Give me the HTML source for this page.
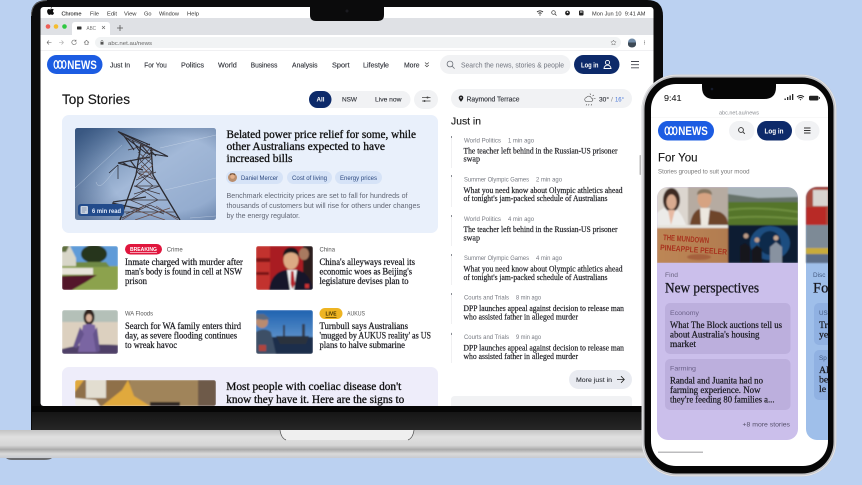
<!DOCTYPE html>
<html><head><meta charset="utf-8"><style>
html,body{margin:0;padding:0;width:862px;height:485px;overflow:hidden;background:#bbd1f1}
svg{display:block}
text{font-family:"Liberation Sans",sans-serif;white-space:pre}
.n{font-size:7.5px;fill:#2a2d34;font-weight:400;stroke:#2a2d34;stroke-width:.12}
.m{font-size:6.2px;fill:#555}
.u{font-family:"Liberation Serif",serif;font-size:12px;fill:#111;stroke:#111;stroke-width:.32}
.s{font-family:"Liberation Serif",serif;font-size:9.8px;fill:#1a1a1f;stroke:#1a1a1f;stroke-width:.24}
.j{font-family:"Liberation Serif",serif;font-size:8.6px;fill:#1d1d22;stroke:#1d1d22;stroke-width:.2}
.d{font-size:7.4px;fill:#626775}
.c{font-size:6.4px;fill:#2d4a80}
.g{font-size:6.2px;fill:#777a82}
</style></head><body>
<svg xmlns="http://www.w3.org/2000/svg" width="862" height="485" viewBox="0 0 862 485">
<defs>
<linearGradient id="base" x1="0" y1="0" x2="0" y2="1"><stop offset="0" stop-color="#c4c4c4"/><stop offset=".25" stop-color="#e0e0e0"/><stop offset=".55" stop-color="#d6d6d6"/><stop offset=".7" stop-color="#a9a9a9"/><stop offset=".85" stop-color="#dadada"/><stop offset="1" stop-color="#c8cad0"/></linearGradient>
<linearGradient id="bez" x1="0" y1="0" x2="0" y2="1"><stop offset="0" stop-color="#101010"/><stop offset="1" stop-color="#262626"/></linearGradient>
<linearGradient id="sky" x1="0" y1="0" x2="1" y2="1"><stop offset="0" stop-color="#4f7099"/><stop offset=".5" stop-color="#a3b9d8"/><stop offset="1" stop-color="#8ea7cb"/></linearGradient>
<radialGradient id="vig" cx=".65" cy=".5" r=".75"><stop offset=".55" stop-color="#1e3a66" stop-opacity="0"/><stop offset="1" stop-color="#1e3a66" stop-opacity=".5"/></radialGradient>
<linearGradient id="sky2" x1="0" y1="0" x2="0" y2="1"><stop offset="0" stop-color="#1f62b0"/><stop offset="1" stop-color="#7ba9d8"/></linearGradient>
<linearGradient id="card" x1="0" y1="0" x2="1" y2="0"><stop offset="0" stop-color="#9a7b4a"/><stop offset="1" stop-color="#6d5138"/></linearGradient>
<filter id="b1" x="-5%" y="-5%" width="110%" height="110%"><feGaussianBlur stdDeviation=".7"/></filter>
<filter id="b2" x="-5%" y="-5%" width="110%" height="110%"><feGaussianBlur stdDeviation=".35"/></filter>
<clipPath id="cS"><rect x="40.5" y="7" width="613" height="399" rx="3"/></clipPath>
<clipPath id="c0"><rect x="75" y="128" width="141" height="92" rx="2.5"/></clipPath>
<clipPath id="c1"><rect x="62" y="246" width="56" height="44" rx="2.5"/></clipPath>
<clipPath id="c2"><rect x="256" y="246" width="57" height="44" rx="2.5"/></clipPath>
<clipPath id="c3"><rect x="62" y="310" width="56" height="44" rx="2.5"/></clipPath>
<clipPath id="c4"><rect x="256" y="310" width="57" height="44" rx="2.5"/></clipPath>
<clipPath id="c5"><rect x="75" y="380" width="141" height="26" rx="2.5"/></clipPath>
<clipPath id="cP"><rect x="651" y="84" width="177" height="382" rx="25"/></clipPath>
<clipPath id="cC"><path d="M657 263V198a11 11 0 0 1 11-11h119a11 11 0 0 1 11 11v65z"/></clipPath>
</defs>

<rect width="862" height="485" fill="#bbd1f1"/>

<!-- LAPTOP -->
<path d="M31 430V16Q31 0 47 0H647Q663 0 663 16V430z" fill="#0b0b0c"/>
<path d="M31.500 16Q31.500 .6 47 .6" fill="none" stroke="#666" stroke-width=".8"/>
<rect x="32" y="406" width="622" height="24" fill="url(#bez)"/>
<rect x="32" y="406" width="622" height="6" fill="#060606"/>
<rect x="0" y="430" width="662" height="28" fill="url(#base)"/>
<path d="M280 430h134l-2 6q-1 4-6 4H288q-5 0-6-4z" fill="#efefef"/>
<path d="M280 430q1 8 6 10M414 430q-1 8-6 10" stroke="#555" stroke-width=".7" fill="none"/>
<path d="M6 458H52Q50 460 44 460H12Q8 460 6 458z" fill="#6a6c70"/>

<g clip-path="url(#cS)">
<rect x="40" y="7" width="614" height="400" fill="#fff"/>
<g filter="url(#b2)">
<rect x="40" y="18" width="614" height="17" fill="#dfe1e5"/>
<path d="M50 9.500c1 0 1.200-.6 2.200-.6.7 0 1.300.4 1.600.9-1.300.8-1 2.600.3 3.100-.4 1-1 2-1.800 2-.6 0-.8-.4-1.500-.4s-.9.4-1.500.4c-1.100 0-2.200-2-2.200-3.600 0-1.500 1-2.300 1.900-2.300zM52 7.300c0 .8-.7 1.500-1.400 1.400 0-.8.7-1.500 1.400-1.400z" fill="#111"/>
<text x="61.500" y="15.400" font-size="5.300" fill="#222" stroke="#222" stroke-width=".1" textLength="20" lengthAdjust="spacingAndGlyphs">Chrome</text>
<text x="90" y="15.400" font-size="5.300" fill="#333" textLength="9" lengthAdjust="spacingAndGlyphs">File</text>
<text x="107" y="15.400" font-size="5.300" fill="#333" textLength="10" lengthAdjust="spacingAndGlyphs">Edit</text>
<text x="124" y="15.400" font-size="5.300" fill="#333" textLength="12.500" lengthAdjust="spacingAndGlyphs">View</text>
<text x="144" y="15.400" font-size="5.300" fill="#333" textLength="7.500" lengthAdjust="spacingAndGlyphs">Go</text>
<text x="159" y="15.400" font-size="5.300" fill="#333" textLength="20" lengthAdjust="spacingAndGlyphs">Window</text>
<text x="187" y="15.400" font-size="5.300" fill="#333" textLength="12" lengthAdjust="spacingAndGlyphs">Help</text>
<path d="M537 12q3-2.400 6 0M538.500 13.500q1.500-1.200 3 0" stroke="#222" fill="none" stroke-width=".9"/><circle cx="540" cy="15" r=".6" fill="#222"/>
<circle cx="553.500" cy="12.500" r="1.800" fill="none" stroke="#333" stroke-width=".7"/><path d="M555 14l1.500 1.500" stroke="#333" stroke-width=".7"/>
<circle cx="567.500" cy="13" r="2.400" fill="#222"/><circle cx="567.500" cy="12.300" r=".8" fill="#fff"/>
<rect x="579" y="10.500" width="4.500" height="5" rx="1" fill="#222"/><rect x="580" y="11.500" width="2.500" height="1" fill="#fff"/>
<text x="592" y="15.400" font-size="5.200" fill="#333" textLength="53.500" lengthAdjust="spacingAndGlyphs">Mon Jun 10  9:41 AM</text>
<circle cx="48" cy="26.500" r="2.300" fill="#ee5f56"/><circle cx="56" cy="26.500" r="2.300" fill="#f5bd2f"/><circle cx="64.500" cy="26.500" r="2.300" fill="#2fc840"/>
<path d="M72 35v-10q0-3 3-3h32q3 0 3 3v10z" fill="#fff"/>
<rect x="77" y="26.500" width="4.500" height="3" rx=".5" fill="#333"/>
<text x="86.500" y="30" font-size="5" fill="#777" textLength="9.500" lengthAdjust="spacingAndGlyphs">ABC</text>
<path d="M102 26l3 3M105 26l-3 3" stroke="#666" stroke-width=".6"/>
<path d="M120 25v6M117 28h6" stroke="#555" stroke-width=".8"/>
<rect x="40" y="35" width="614" height="15" fill="#fff"/>
<rect x="40" y="50" width="614" height=".6" fill="#e6e6e8"/>
<path d="M47 42.500h4.500M47 42.500l2-2M47 42.500l2 2" stroke="#666" stroke-width=".6" fill="none"/>
<path d="M59 42.500h4.500M63.500 42.500l-2-2M63.500 42.500l-2 2" stroke="#aaa" stroke-width=".6" fill="none"/>
<path d="M76 41a2.300 2.300 0 1 0 .4 1.500M76 39.800v1.400h-1.400" stroke="#666" stroke-width=".6" fill="none"/>
<path d="M84 42.500l2.500-2.200 2.500 2.200M85 42v2.500h3V42" stroke="#666" stroke-width=".6" fill="none"/>
<rect x="95" y="37" width="526" height="11" rx="5.500" fill="#f1f3f4"/>
<rect x="100.500" y="42" width="3" height="2.600" fill="#555"/><path d="M101 42v-.7a1 1 0 0 1 2 0v.7" stroke="#555" stroke-width=".5" fill="none"/>
<text x="108" y="45" font-size="5.400" fill="#666" textLength="44" lengthAdjust="spacingAndGlyphs">abc.net.au/news</text>
<path d="M613.500 40l.8 1.700 1.800.2-1.300 1.300.3 1.800-1.600-.9-1.600.9.300-1.800-1.300-1.300 1.800-.2z" fill="none" stroke="#777" stroke-width=".5"/>
<circle cx="632" cy="42.500" r="4" fill="#6f8aa6"/><path d="M628 42.500h8v2a4 3 0 0 1-8 0z" fill="#3d4a55"/>
<circle cx="644.500" cy="41" r=".5" fill="#777"/><circle cx="644.500" cy="42.500" r=".5" fill="#777"/><circle cx="644.500" cy="44" r=".5" fill="#777"/>
</g>

<g filter="url(#b2)">
<rect x="47" y="55" width="55.500" height="19" rx="9.500" fill="#1c5be2"/>
<g fill="none" stroke="#fff" stroke-width="1.200">
<ellipse cx="56" cy="64.500" rx="1.900" ry="3.900"/><ellipse cx="60" cy="64.500" rx="1.900" ry="3.900"/><ellipse cx="64" cy="64.500" rx="1.900" ry="3.900"/>
</g>
<text x="67.300" y="68.800" font-size="11.500" font-weight="700" fill="#fff" textLength="29.500" lengthAdjust="spacingAndGlyphs">NEWS</text>
<text class="n" x="110" y="67.500" textLength="20" lengthAdjust="spacingAndGlyphs">Just In</text>
<text class="n" x="144.300" y="67.500" textLength="22.500" lengthAdjust="spacingAndGlyphs">For You</text>
<text class="n" x="181" y="67.500" textLength="23" lengthAdjust="spacingAndGlyphs">Politics</text>
<text class="n" x="218" y="67.500" textLength="18.800" lengthAdjust="spacingAndGlyphs">World</text>
<text class="n" x="250.700" y="67.500" textLength="26.700" lengthAdjust="spacingAndGlyphs">Business</text>
<text class="n" x="292" y="67.500" textLength="25.500" lengthAdjust="spacingAndGlyphs">Analysis</text>
<text class="n" x="332" y="67.500" textLength="17.500" lengthAdjust="spacingAndGlyphs">Sport</text>
<text class="n" x="363" y="67.500" textLength="26" lengthAdjust="spacingAndGlyphs">Lifestyle</text>
<text class="n" x="404" y="67.500" textLength="15.500" lengthAdjust="spacingAndGlyphs">More</text>
<path d="M425 62.500l1.900 1.800 1.900-1.800M425 65l1.900 1.800 1.900-1.800" stroke="#444" stroke-width=".7" fill="none"/>
<rect x="440" y="55" width="130.500" height="19" rx="9.500" fill="#f1f2f4"/>
<circle cx="450" cy="64" r="2.900" fill="none" stroke="#6b6f78" stroke-width=".8"/><path d="M452.100 66.100l2.500 2.500" stroke="#6b6f78" stroke-width=".8"/>
<text x="461" y="67.500" font-size="7.200" fill="#71757f" textLength="103" lengthAdjust="spacingAndGlyphs">Search the news, stories &amp; people</text>
<rect x="574" y="55" width="45.500" height="19" rx="9.500" fill="#0f2c6b"/>
<text x="581" y="67.500" font-size="7.400" font-weight="700" fill="#fff" textLength="17.500" lengthAdjust="spacingAndGlyphs">Log in</text>
<circle cx="607.500" cy="62.500" r="2.100" fill="none" stroke="#fff" stroke-width=".9"/><path d="M604 68.500q.5-3.300 3.500-3.300t3.500 3.300z" fill="none" stroke="#fff" stroke-width=".9"/>
<path d="M631 61.500h8M631 64.700h8M631 67.800h8" stroke="#44474f" stroke-width=".9"/>
</g>

<g filter="url(#b2)">
<text x="62" y="104" font-size="14" fill="#151515" stroke="#151515" stroke-width=".15" textLength="68" lengthAdjust="spacingAndGlyphs">Top Stories</text>
<rect x="320" y="91" width="90.500" height="17" rx="8.500" fill="#f1f2f4"/>
<rect x="309" y="91" width="22.500" height="17" rx="8.500" fill="#0f2c6b"/>
<text x="316.500" y="101.500" font-size="6.600" font-weight="700" fill="#fff" textLength="8" lengthAdjust="spacingAndGlyphs">All</text>
<text x="342" y="101.500" class="n" style="font-size:6.800px" textLength="15" lengthAdjust="spacingAndGlyphs">NSW</text>
<text x="375" y="101.500" class="n" style="font-size:6.800px" textLength="26.500" lengthAdjust="spacingAndGlyphs">Live now</text>
<rect x="414" y="90" width="24" height="19" rx="9.500" fill="#f1f2f4"/>
<path d="M422 97.500h8.500M422 101h8.500" stroke="#444" stroke-width=".7"/><circle cx="427.500" cy="97.500" r="1" fill="#444"/><circle cx="424.500" cy="101" r="1" fill="#444"/>

<rect x="451" y="89" width="181" height="19" rx="9.500" fill="#f1f2f4"/>
<path d="M461 95.500a2.300 2.300 0 0 1 2.300 2.300c0 1.700-2.300 4-2.300 4s-2.300-2.300-2.300-4a2.300 2.300 0 0 1 2.300-2.300z" fill="#1a1a1f"/><circle cx="461" cy="97.800" r=".8" fill="#f1f2f4"/>
<text x="466.500" y="101.500" class="n" style="font-size:7px" textLength="53" lengthAdjust="spacingAndGlyphs">Raymond Terrace</text>
<path d="M585 100.500a2 2 0 0 1 1.500-3 2.600 2.600 0 0 1 4.800.6 1.700 1.700 0 0 1 .4 3.300h-6a1.500 1.500 0 0 1-.7-.9zM590 93.500l.5 1.500M594 95l-1.500 1M595.500 98.500l-1.800-.1M586.500 104l-.4 1.500M589 104l-.4 1.500M591.500 104l-.4 1.500" fill="none" stroke="#444" stroke-width=".55"/>
<text x="599" y="101.500" font-size="6.800" fill="#2a2d34" stroke="#2a2d34" stroke-width=".1" textLength="10" lengthAdjust="spacingAndGlyphs">30°</text>
<text x="611" y="101.500" font-size="6.800" fill="#888">/</text>
<text x="615" y="101.500" font-size="6.800" fill="#4a78d8" textLength="9" lengthAdjust="spacingAndGlyphs">16°</text>

<rect x="62" y="115" width="376" height="118" rx="7" fill="#e9f0fb"/>
</g>
<g clip-path="url(#c0)">
<rect x="75" y="128" width="141" height="92" fill="url(#sky)"/>
<rect x="75" y="128" width="141" height="92" fill="url(#vig)"/>
<g filter="url(#b2)" fill="none">
<path d="M75 188L122 145M160 148L216 135M165 190L216 178M190 218L216 216M118 165q-8 12-14 18t-8-1" stroke="#dde5f0" stroke-opacity=".55" stroke-width=".5"/>
<path d="M118 131.500L168 156.500 146 153 118 131.500zM118 131.500L150 145M124 136L134 150M132 140L140 152M142 146L150 155M150 150L156 156" stroke="#2b2a30" stroke-width="1.100"/>
<path d="M118 163L150 157M118 163L143 170M113 202L146 197M112 203L140 209M122 162L130 167M130 160L136 168" stroke="#2f2e35" stroke-width="1.200"/>
<path d="M141 144L136 175 120 220M151 147L153 175 180 220" stroke="#2a292f" stroke-width="1.300"/>
<path d="M141 144L152 158 137 172 153 186 130 200 164 214M151 147L140 160 152 172 136 186 158 200 126 214M128 150L150 144M125 137L158 152M139 172H153M134 186H160M128 200H168M124 212H176M122 218L150 205 178 218M137 158H152M138 165L153 150M138 152L153 165M136 180L156 172M136 172L156 180M134 194L160 186M134 186L160 194" stroke="#3f383d" stroke-width=".7"/>
<path d="M122 220L144 206M178 220L156 206M130 208L165 220M170 208L135 220M141 165L153 178M153 165L138 178" stroke="#6a4f4a" stroke-width=".7"/>
<path d="M118 165v14M118 165l-9 8" stroke="#23232a" stroke-width=".7"/>
</g>
</g>
<g filter="url(#b2)">
<rect x="78" y="204" width="46" height="12" rx="3" fill="#214b8b"/>
<rect x="80.500" y="206" width="7.500" height="8" rx="1" fill="#c8d2e0"/><path d="M82 208h4.500M82 210h4.500M82 212h3" stroke="#4d6488" stroke-width=".5"/>
<text x="92" y="213" font-size="6.400" font-weight="700" fill="#e6eefc" textLength="29" lengthAdjust="spacingAndGlyphs">6 min read</text>

<text class="u" x="226.500" y="138" textLength="189.500" lengthAdjust="spacingAndGlyphs">Belated power price relief for some, while</text>
<text class="u" x="226.500" y="150" textLength="158.500" lengthAdjust="spacingAndGlyphs">other Australians expected to have</text>
<text class="u" x="226.500" y="162" textLength="66" lengthAdjust="spacingAndGlyphs">increased bills</text>

<rect x="226" y="171" width="57" height="13" rx="6.500" fill="#d6e3f7"/>
<circle cx="232.500" cy="177.500" r="4.500" fill="#b98e6e"/><circle cx="232.500" cy="176.500" r="2.300" fill="#e3b08c"/><path d="M230 175.500q2.500-2.500 5 0l-.2-2h-4.600z" fill="#6a4a32"/>
<text class="c" x="241" y="179.800" textLength="37" lengthAdjust="spacingAndGlyphs">Daniel Mercer</text>
<rect x="287" y="171" width="45" height="13" rx="6.500" fill="#d6e3f7"/>
<text class="c" x="292" y="179.800" textLength="35" lengthAdjust="spacingAndGlyphs">Cost of living</text>
<rect x="335" y="171" width="47" height="13" rx="6.500" fill="#d6e3f7"/>
<text class="c" x="340" y="179.800" textLength="37" lengthAdjust="spacingAndGlyphs">Energy prices</text>

<text class="d" x="226.500" y="198" textLength="181" lengthAdjust="spacingAndGlyphs">Benchmark electricity prices are set to fall for hundreds of</text>
<text class="d" x="226.500" y="208" textLength="193.500" lengthAdjust="spacingAndGlyphs">thousands of customers but will rise for others under changes</text>
<text class="d" x="226.500" y="218" textLength="73.500" lengthAdjust="spacingAndGlyphs">by the energy regulator.</text>
</g>

<g clip-path="url(#c1)"><g filter="url(#b1)">
<rect x="62" y="246" width="56" height="44" fill="#5f9bd8"/>
<ellipse cx="94" cy="254" rx="13" ry="9" fill="#27351f"/>
<path d="M62 249l8-3 6 12v8H62z" fill="#d8d6c8"/>
<path d="M62 246h7l-3 6h-4z" fill="#5e6e3c"/>
<rect x="62" y="266" width="56" height="24" fill="#8ca24e"/>
<path d="M76 262h30l4 5H76z" fill="#6f8a44"/>
<rect x="62" y="268" width="31" height="6.500" fill="#e8e4da"/>
<path d="M62 276L97 275 86 282 72 290H62z" fill="#52152a"/>
</g></g>
<g clip-path="url(#c2)"><g filter="url(#b1)">
<rect x="256" y="246" width="57" height="44" fill="#a91e22"/>
<rect x="256" y="246" width="14" height="44" fill="#c2322f"/>
<path d="M256 258h14v4h-14zM256 272h13v3h-13z" fill="#7c1313"/>
<rect x="303" y="246" width="10" height="44" fill="#2c1a1c"/>
<ellipse cx="304" cy="254" rx="5" ry="6" fill="#a87a60"/>
<path d="M269 290q2-17 16-20h13q12 3 15 20z" fill="#12172a"/>
<path d="M287 270h10l-3 20h-4z" fill="#eef0f2"/><path d="M291 271h2.500l1.500 13-2.500 5-2-5z" fill="#b4222c"/>
<ellipse cx="291" cy="260" rx="7.500" ry="9.500" fill="#dcaa84"/>
<path d="M283 257q0-9.500 8-9.500t8 9.500q-3-4.500-8-4.500t-8 4.500z" fill="#15141a"/>
<rect x="305" y="284" width="4" height="4" fill="#c73030"/>
</g></g>
<g clip-path="url(#c3)"><g filter="url(#b1)">
<rect x="62" y="310" width="56" height="14" fill="#b4c0b8"/>
<rect x="62" y="322" width="56" height="32" fill="#dcd0bf"/>
<path d="M62 349q20-6 56-4v9H62z" fill="#4f4168"/>
<ellipse cx="89" cy="317" rx="5.500" ry="8" fill="#2f221d"/>
<ellipse cx="89" cy="318" rx="3" ry="4" fill="#d9b29a"/>
<path d="M83 325q6-2 12 0l3 27H78z" fill="#7a65a2"/>
<path d="M80 327l-7 20 4 1 7-14zM97 327l3 24-4 1-3-18z" fill="#65528c"/>
</g></g>
<g clip-path="url(#c4)"><g filter="url(#b1)">
<rect x="256" y="310" width="57" height="44" fill="url(#sky2)"/>
<rect x="256" y="337" width="57" height="17" fill="#1c2f4c"/>
<path d="M276 336h33l-3 8h-26z" fill="#2a313e"/>
<path d="M283 336v-11h2v11zM302 336v-12h3v12z" fill="#344052"/>
<path d="M256 354v-22q8-5 15 0l5 22z" fill="#3d4f66"/>
<ellipse cx="262" cy="322" rx="6" ry="6" fill="#b98b6f"/>
<path d="M256 314h8l6 5-6 1-8-1z" fill="#5d6b7e"/>
<rect x="259" y="345" width="7" height="6" fill="#b0453c"/>
</g></g>

<g filter="url(#b2)">
<rect x="125" y="244" width="37" height="10.500" rx="5.200" fill="#e0143c"/>
<text x="130" y="250.800" font-size="5.800" font-weight="700" fill="#fff" textLength="27" lengthAdjust="spacingAndGlyphs">BREAKING</text>
<rect x="130" y="252" width="27" height=".6" fill="#fff"/>
<text class="m" x="166.700" y="251.500" textLength="16" lengthAdjust="spacingAndGlyphs">Crime</text>
<text class="s" x="125" y="265" textLength="118" lengthAdjust="spacingAndGlyphs">Inmate charged with murder after</text>
<text class="s" x="125" y="274.500" textLength="117" lengthAdjust="spacingAndGlyphs">man's body is found in cell at NSW</text>
<text class="s" x="125" y="284" textLength="22" lengthAdjust="spacingAndGlyphs">prison</text>

<text class="m" x="319.500" y="251.500" textLength="15.500" lengthAdjust="spacingAndGlyphs">China</text>
<text class="s" x="319.500" y="265" textLength="95.500" lengthAdjust="spacingAndGlyphs">China's alleyways reveal its</text>
<text class="s" x="319.500" y="274.500" textLength="92.500" lengthAdjust="spacingAndGlyphs">economic woes as Beijing's</text>
<text class="s" x="319.500" y="284" textLength="89" lengthAdjust="spacingAndGlyphs">legislature devises plan to</text>

<text class="m" x="125" y="315.500" textLength="28" lengthAdjust="spacingAndGlyphs">WA Floods</text>
<text class="s" x="125" y="329" textLength="116" lengthAdjust="spacingAndGlyphs">Search for WA family enters third</text>
<text class="s" x="125" y="338.500" textLength="112" lengthAdjust="spacingAndGlyphs">day, as severe flooding continues</text>
<text class="s" x="125" y="348" textLength="52" lengthAdjust="spacingAndGlyphs">to wreak havoc</text>

<rect x="319.500" y="308" width="23" height="11" rx="5.500" fill="#eeb420"/>
<text x="325.500" y="315.500" font-size="5.800" font-weight="700" fill="#3a2c00" textLength="11" lengthAdjust="spacingAndGlyphs">LIVE</text>
<rect x="325.500" y="317" width="11" height=".6" fill="#3a2c00"/>
<text class="m" x="347" y="315.500" textLength="18" lengthAdjust="spacingAndGlyphs">AUKUS</text>
<text class="s" x="319.500" y="329" textLength="88.500" lengthAdjust="spacingAndGlyphs">Turnbull says Australians</text>
<text class="s" x="319.500" y="338.500" textLength="111.500" lengthAdjust="spacingAndGlyphs">'mugged by AUKUS reality' as US</text>
<text class="s" x="319.500" y="348" textLength="85.500" lengthAdjust="spacingAndGlyphs">plans to halve submarine</text>

<rect x="62" y="367" width="376" height="50" rx="7" fill="#eeedfa"/>
</g>
<g clip-path="url(#c5)"><g filter="url(#b1)">
<rect x="75" y="380" width="141" height="26" fill="#8f7048"/>
<rect x="130" y="380" width="70" height="26" fill="#a0845a"/>
<rect x="198" y="380" width="18" height="26" fill="#6e5a48"/>
<rect x="86" y="380" width="20" height="18" fill="#e2ddd0"/>
<path d="M75 392L84 380H75zM102 406L122 390 128 380 134 396 150 406z" fill="#e0a93d"/>
<path d="M75 406V398L96 400 100 406z" fill="#f0eee8"/>
<rect x="150" y="402" width="30" height="4" fill="#2d2620"/>
</g></g>
<g filter="url(#b2)">
<text class="u" x="226.300" y="390" textLength="175" lengthAdjust="spacingAndGlyphs">Most people with coeliac disease don't</text>
<text class="u" x="226.300" y="403" textLength="178" lengthAdjust="spacingAndGlyphs">know they have it. Here are the signs to</text>

<text x="451" y="124.500" font-size="10.500" fill="#151515" stroke="#151515" stroke-width=".12" textLength="30" lengthAdjust="spacingAndGlyphs">Just in</text>
<path d="M451.500 137v31M451.500 176v31M451.500 215v31M451.500 254v31M451.500 293v31M451.500 332v31" stroke="#f0f0f2" stroke-width="1"/>
<g fill="#8a8d94"><rect x="451" y="136" width="1" height="2"/><rect x="451" y="175" width="1" height="2"/><rect x="451" y="215" width="1" height="2"/><rect x="451" y="254" width="1" height="2"/><rect x="451" y="293" width="1" height="2"/><rect x="451" y="333" width="1" height="2"/></g>

<text class="g" x="464" y="142.500" textLength="37" lengthAdjust="spacingAndGlyphs">World Politics</text><text class="g" x="508" y="142.500" textLength="26" lengthAdjust="spacingAndGlyphs">1 min ago</text>
<text class="j" x="463.500" y="153.500" textLength="154" lengthAdjust="spacingAndGlyphs">The teacher left behind in the Russian-US prisoner</text>
<text class="j" x="463.500" y="161.500" textLength="16.500" lengthAdjust="spacingAndGlyphs">swap</text>

<text class="g" x="464" y="181.500" textLength="65" lengthAdjust="spacingAndGlyphs">Summer Olympic Games</text><text class="g" x="536" y="181.500" textLength="26" lengthAdjust="spacingAndGlyphs">2 min ago</text>
<text class="j" x="463.500" y="192.800" textLength="159" lengthAdjust="spacingAndGlyphs">What you need know about Olympic athletics ahead</text>
<text class="j" x="463.500" y="201" textLength="144" lengthAdjust="spacingAndGlyphs">of tonight's jam-packed schedule of Australians</text>

<text class="g" x="464" y="221" textLength="37" lengthAdjust="spacingAndGlyphs">World Politics</text><text class="g" x="508" y="221" textLength="26" lengthAdjust="spacingAndGlyphs">4 min ago</text>
<text class="j" x="463.500" y="232" textLength="154" lengthAdjust="spacingAndGlyphs">The teacher left behind in the Russian-US prisoner</text>
<text class="j" x="463.500" y="240.300" textLength="16.500" lengthAdjust="spacingAndGlyphs">swap</text>

<text class="g" x="464" y="260" textLength="65" lengthAdjust="spacingAndGlyphs">Summer Olympic Games</text><text class="g" x="536" y="260" textLength="26" lengthAdjust="spacingAndGlyphs">4 min ago</text>
<text class="j" x="463.500" y="271.500" textLength="159" lengthAdjust="spacingAndGlyphs">What you need know about Olympic athletics ahead</text>
<text class="j" x="463.500" y="279.800" textLength="144" lengthAdjust="spacingAndGlyphs">of tonight's jam-packed schedule of Australians</text>

<text class="g" x="464" y="299.500" textLength="45" lengthAdjust="spacingAndGlyphs">Courts and Trials</text><text class="g" x="516" y="299.500" textLength="25" lengthAdjust="spacingAndGlyphs">8 min ago</text>
<text class="j" x="463.500" y="311" textLength="160.500" lengthAdjust="spacingAndGlyphs">DPP launches appeal against decision to release man</text>
<text class="j" x="463.500" y="319.300" textLength="114.500" lengthAdjust="spacingAndGlyphs">who assisted father in alleged murder</text>

<text class="g" x="464" y="339" textLength="45" lengthAdjust="spacingAndGlyphs">Courts and Trials</text><text class="g" x="516" y="339" textLength="25" lengthAdjust="spacingAndGlyphs">9 min ago</text>
<text class="j" x="463.500" y="350.500" textLength="160.500" lengthAdjust="spacingAndGlyphs">DPP launches appeal against decision to release man</text>
<text class="j" x="463.500" y="358.800" textLength="114.500" lengthAdjust="spacingAndGlyphs">who assisted father in alleged murder</text>

<rect x="569" y="370" width="63" height="19" rx="9.500" fill="#e9ebf1"/>
<text x="576" y="382" font-size="6.800" fill="#2a2d34" stroke="#2a2d34" stroke-width=".08" textLength="36" lengthAdjust="spacingAndGlyphs">More just in</text>
<path d="M617 379.500h7M621 376.200l3.300 3.300-3.300 3.300" stroke="#222" stroke-width=".8" fill="none"/>
<path d="M451 406v-6q0-4 4-4h173q4 0 4 4v6z" fill="#f1f2f4"/>
</g>
<rect x="639.500" y="155" width="1.500" height="20" rx=".7" fill="#bbb"/>
</g>

<!-- PHONE -->
<rect x="641.500" y="74.500" width="195" height="402" rx="35" fill="#c2c3c6"/>
<rect x="642.200" y="75.200" width="193.600" height="400.600" rx="34.500" fill="none" stroke="#e8e8ea" stroke-width=".9"/>
<rect x="644.500" y="77.500" width="189" height="396" rx="31.500" fill="#060606"/>
<g clip-path="url(#cP)">
<rect x="650" y="83" width="180" height="385" fill="#fff"/>
<g filter="url(#b2)">
<text x="664" y="101" font-size="8.600" fill="#222" stroke="#222" stroke-width=".12" textLength="17.500" lengthAdjust="spacingAndGlyphs">9:41</text>
<path d="M784.500 100h1.300v-1.500h-1.300zM787 100h1.300v-3h-1.300zM789.500 100h1.300v-4.500h-1.300zM792 100h1.300v-6h-1.300z" fill="#222"/>
<path d="M797 97q3.500-3 7 0M798.300 98.300q2.200-1.900 4.400 0" stroke="#222" stroke-width=".9" fill="none"/><path d="M799.600 99.500q.9-.8 1.800 0l-.9 1z" fill="#222"/>
<rect x="809" y="95.700" width="9.500" height="4.800" rx="1.200" fill="#222"/><rect x="819" y="97" width=".8" height="2" fill="#222"/>
<text x="719" y="114.700" font-size="5.400" fill="#8a8d92" textLength="40" lengthAdjust="spacingAndGlyphs">abc.net.au/news</text>
<rect x="651" y="117" width="177" height=".5" fill="#f0f0f0"/>

<rect x="658" y="121" width="56" height="19.500" rx="9.700" fill="#1c5be2"/>
<g fill="none" stroke="#fff" stroke-width="1.200">
<ellipse cx="667" cy="130.700" rx="1.900" ry="3.900"/><ellipse cx="671" cy="130.700" rx="1.900" ry="3.900"/><ellipse cx="675" cy="130.700" rx="1.900" ry="3.900"/>
</g>
<text x="678.300" y="135" font-size="11.500" font-weight="700" fill="#fff" textLength="29.500" lengthAdjust="spacingAndGlyphs">NEWS</text>
<rect x="729" y="121" width="25.500" height="19.500" rx="9.700" fill="#f1f2f4"/>
<circle cx="741" cy="130" r="2.400" fill="none" stroke="#333" stroke-width=".9"/><path d="M742.800 131.800l2 2" stroke="#333" stroke-width=".9"/>
<rect x="757" y="121" width="35" height="19.500" rx="9.700" fill="#0f2c6b"/>
<text x="764.500" y="133.500" font-size="7.400" font-weight="700" fill="#fff" textLength="19" lengthAdjust="spacingAndGlyphs">Log in</text>
<rect x="795" y="121" width="24.500" height="19.500" rx="9.700" fill="#f1f2f4"/>
<path d="M804 128h6.500M804 130.500h6.500M804 133h6.500" stroke="#333" stroke-width=".9"/>

<text x="658" y="161.700" font-size="11.500" fill="#151515" stroke="#151515" stroke-width=".12" textLength="39.500" lengthAdjust="spacingAndGlyphs">For You</text>
<text x="658" y="173.500" font-size="6.200" fill="#777" textLength="91.500" lengthAdjust="spacingAndGlyphs">Stories grouped to suit your mood</text>
</g>

<path d="M657 263V198a11 11 0 0 1 11-11h119a11 11 0 0 1 11 11v231a11 11 0 0 1-11 11H668a11 11 0 0 1-11-11z" fill="#cbbfeb"/>
<g clip-path="url(#cC)"><g filter="url(#b1)">
<rect x="657" y="187" width="71" height="38" fill="#dcd6cf"/>
<rect x="688" y="187" width="40" height="38" fill="#b6aba1"/>
<path d="M657 225v-12q8-8 15-6 8 2 14 18z" fill="#ecebe8"/>
<ellipse cx="671.500" cy="200" rx="8.500" ry="12" fill="#3e2b22"/><ellipse cx="671.500" cy="202" rx="5" ry="7.500" fill="#d9ab90"/>
<path d="M668 210l3 15 4-15z" fill="#e7b9a2"/>
<path d="M690 225q2-15 12-17l8 2 10 2q8 4 8 13z" fill="#6e4429"/>
<path d="M700 208h10l-2 17h-7z" fill="#ece7df"/>
<ellipse cx="704.500" cy="199" rx="7" ry="9" fill="#d6a382"/>
<path d="M697 195q0-6 7.500-6t7.500 6q-4-2-7.500-2t-7.500 2z" fill="#85745e"/>
<rect x="728" y="187" width="70" height="14" fill="#a8b3b8"/>
<path d="M728 194l30 4 40-1v6h-70z" fill="#66736a"/>
<rect x="728" y="202" width="70" height="23" fill="#55752c"/>
<path d="M728 210q30-4 70 2M728 218q30-3 70 1" stroke="#6e8f3e" stroke-width="2" fill="none"/>
<rect x="657" y="225" width="71" height="38" fill="#c88a58"/>
<rect x="657" y="225" width="71" height="38" fill="url(#card)" opacity=".25"/>
<rect x="657" y="225" width="71" height="3" fill="#e7e4de"/>
<ellipse cx="699" cy="257" rx="12" ry="3" fill="#a5603c"/>
<rect x="728" y="225" width="70" height="38" fill="#0b1a30"/>
<ellipse cx="770" cy="243" rx="20" ry="17" fill="#1b4e80"/>
<ellipse cx="770" cy="243" rx="11" ry="12" fill="#0f2b4c"/>
<path d="M740 263v-17l5-3 5 4v16zM752 263v-14l5-4 5 4v14z" fill="#16181c"/>
<path d="M770 263v-16l6-5 6 5v16z" fill="#8892a0"/>
<circle cx="746" cy="236" r="2.500" fill="#b99a86"/><circle cx="757" cy="240" r="2.500" fill="#b99a86"/><circle cx="776" cy="238" r="2.500" fill="#c5a692"/>
</g>
<g filter="url(#b2)" fill="#a8331e" font-weight="700" font-size="8">
<text x="663" y="240" transform="rotate(4 663 240)" textLength="46" lengthAdjust="spacingAndGlyphs">THE MUNDOWN</text>
<text x="660" y="250" transform="rotate(4 660 250)" textLength="67" lengthAdjust="spacingAndGlyphs">PINEAPPLE PEELER</text>
</g>
</g>
<rect x="657" y="263" width="141" height="1" fill="#cbbfeb"/>
<g filter="url(#b2)">
<text x="665" y="277" font-size="6.400" fill="#6a6480" textLength="13" lengthAdjust="spacingAndGlyphs">Find</text>
<text x="665" y="292.700" style="font-family:'Liberation Serif',serif" font-size="14.500" fill="#15151c" stroke="#15151c" stroke-width=".28" textLength="94" lengthAdjust="spacingAndGlyphs">New perspectives</text>
<rect x="665" y="303" width="125.500" height="51" rx="5" fill="#bcafdd"/>
<text x="670" y="315" font-size="6.300" fill="#6a6088" textLength="29" lengthAdjust="spacingAndGlyphs">Economy</text>
<text class="s" x="670" y="328" textLength="112" lengthAdjust="spacingAndGlyphs">What The Block auctions tell us</text>
<text class="s" x="670" y="337.700" textLength="89.500" lengthAdjust="spacingAndGlyphs">about Australia's housing</text>
<text class="s" x="670" y="347" textLength="26" lengthAdjust="spacingAndGlyphs">market</text>
<rect x="665" y="359" width="125.500" height="51" rx="5" fill="#bcafdd"/>
<text x="670" y="370.500" font-size="6.300" fill="#6a6088" textLength="26" lengthAdjust="spacingAndGlyphs">Farming</text>
<text class="s" x="670" y="383.500" textLength="93" lengthAdjust="spacingAndGlyphs">Randal and Juanita had no</text>
<text class="s" x="670" y="393" textLength="90.500" lengthAdjust="spacingAndGlyphs">farming experience. Now</text>
<text class="s" x="670" y="402.300" textLength="104.500" lengthAdjust="spacingAndGlyphs">they're feeding 80 families a...</text>
<text x="742.500" y="426.700" font-size="6.400" fill="#55506a" textLength="47.500" lengthAdjust="spacingAndGlyphs">+8 more stories</text>

<path d="M806 198a11 11 0 0 1 11-11h20v253h-20a11 11 0 0 1-11-11z" fill="#9fbfea"/>
</g>
<g filter="url(#b1)">
<path d="M806 263V198a11 11 0 0 1 11-11h15v76z" fill="#a84a3c"/>
<rect x="813" y="190" width="15" height="16" fill="#d8d4d0"/>
<rect x="806" y="207" width="20" height="18" fill="#b82a28"/>
<rect x="806" y="225" width="26" height="38" fill="#7d8a96"/>
<rect x="806" y="248" width="26" height="6" fill="#c8ab3a"/>
<rect x="806" y="254" width="26" height="9" fill="#5d6e88"/>
</g>
<g filter="url(#b2)">
<text x="813" y="277" font-size="6.400" fill="#445a80">Disc</text>
<text x="813" y="292.700" style="font-family:'Liberation Serif',serif" font-size="14.500" fill="#15151c" stroke="#15151c" stroke-width=".28">For</text>
<rect x="814" y="303" width="30" height="42" rx="5" fill="#90b1e2"/>
<rect x="814" y="350" width="30" height="50" rx="5" fill="#90b1e2"/>
<text x="819" y="315" font-size="6.300" fill="#445a80">US</text>
<text class="s" x="819" y="328">Tr</text><text class="s" x="819" y="337.700">ye</text>
<text x="819" y="360" font-size="6.300" fill="#445a80">Sp</text>
<text class="s" x="819" y="373">Al</text><text class="s" x="819" y="382.500">be</text><text class="s" x="819" y="392">le</text>
<rect x="658" y="451.500" width="45" height="1.500" fill="#bcbcbe"/>
</g>
</g>
<path d="M702 83h74v4q0 12-12 12h-50q-12 0-12-12z" fill="#060606"/>
<circle cx="712" cy="89" r="1.300" fill="#141a2c"/>
<path d="M310 0h74v15q0 6-6 6h-62q-6 0-6-6z" fill="#0b0b0c"/>
<circle cx="347" cy="11" r="1.500" fill="#1b1b20"/>
</svg>
</body></html>
